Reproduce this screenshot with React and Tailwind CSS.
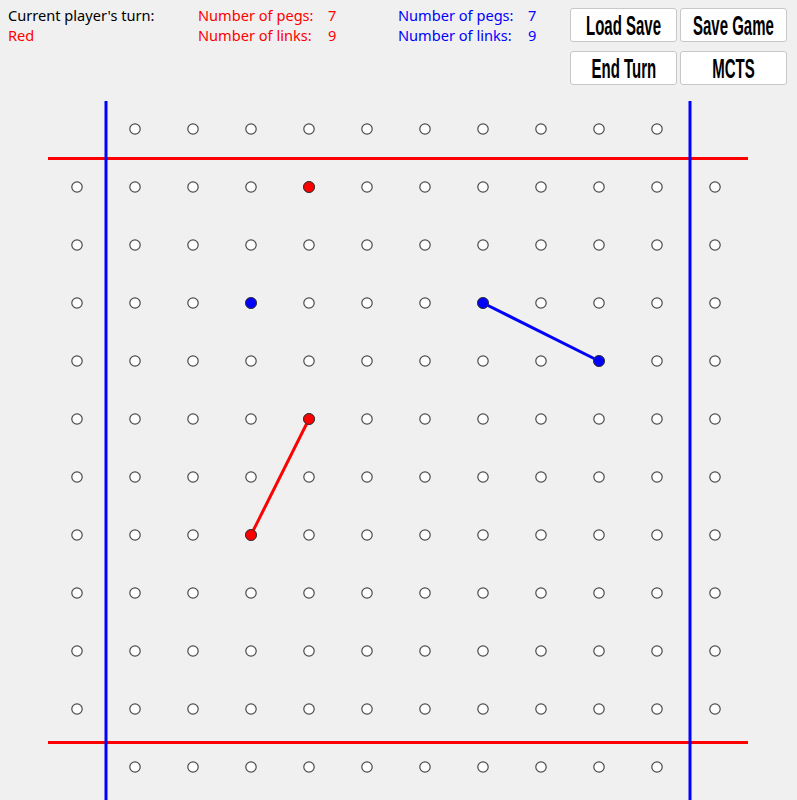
const COLS = [77, 135, 193, 251, 309, 367, 425, 483, 541, 599, 657, 715];
const ROWS = [129, 187, 245, 303, 361, 419, 477, 535, 593, 651, 709, 767];

const RED_PEGS = [[4, 1], [4, 5], [3, 7]];
const BLUE_PEGS = [[3, 3], [7, 3], [9, 4]];

const isCorner = (c, r) => (c === 0 || c === 11) && (r === 0 || r === 11);

const Board = () => {
  const holes = [];
  ROWS.forEach((y, r) =>
    COLS.forEach((x, c) => {
      if (isCorner(c, r)) return;
      holes.push(
        <circle key={`${c}-${r}`} cx={x} cy={y} r="5.2" fill="#ffffff" stroke="#4a4a4a" strokeWidth="1.2" />
      );
    })
  );

  return (
    <svg className="block" width="797" height="706" viewBox="0 94 797 706">
      {/* borders */}
      <line x1="48" y1="158.5" x2="748" y2="158.5" stroke="#ff0000" strokeWidth="3" />
      <line x1="48" y1="742.5" x2="748" y2="742.5" stroke="#ff0000" strokeWidth="3" />
      <line x1="106" y1="101" x2="106" y2="800" stroke="#0000ff" strokeWidth="3" />
      <line x1="690" y1="101" x2="690" y2="800" stroke="#0000ff" strokeWidth="3" />

      {holes}

      {/* links */}
      <line x1={COLS[4]} y1={ROWS[5]} x2={COLS[3]} y2={ROWS[7]} stroke="#ff0000" strokeWidth="3" />
      <line x1={COLS[7]} y1={ROWS[3]} x2={COLS[9]} y2={ROWS[4]} stroke="#0000ff" strokeWidth="3" />

      {RED_PEGS.map(([c, r]) => (
        <circle key={`r${c}-${r}`} cx={COLS[c]} cy={ROWS[r]} r="5.5" fill="#ff0000" stroke="#333" strokeWidth="1" />
      ))}
      {BLUE_PEGS.map(([c, r]) => (
        <circle key={`b${c}-${r}`} cx={COLS[c]} cy={ROWS[r]} r="5.5" fill="#0000ff" stroke="#333" strokeWidth="1" />
      ))}
    </svg>
  );
};

const Btn = ({ children }) => (
  <button
    className="w-[107px] h-[34px] bg-white border border-[#c8c8c8] rounded-[3px] flex items-center justify-center
      whitespace-nowrap overflow-hidden text-black"
  >
    <span className="inline-block text-[25px] leading-none font-bold font-['Liberation_Sans',sans-serif] scale-x-[0.6] scale-y-[1.12]">
      {children}
    </span>
  </button>
);

export default function App() {
  return (
    <div className="w-[797px] h-[800px] bg-[#f0f0f0] overflow-hidden font-['Noto_Sans',sans-serif] text-[14.6px] leading-[20px]">
      <div className="flex h-[94px]">
        <div className="w-[190px] pl-2 pt-[5px]">
          <div className="text-black">Current player's turn:</div>
          <div className="text-[#ff0000]">Red</div>
        </div>
        <div className="w-[200px] pl-2 pt-[5px] text-[#ff0000]">
          <div className="flex"><span className="w-[130px]">Number of pegs:</span><span>7</span></div>
          <div className="flex"><span className="w-[130px]">Number of links:</span><span>9</span></div>
        </div>
        <div className="w-[180px] pl-2 pt-[5px] text-[#0000ff]">
          <div className="flex"><span className="w-[130px]">Number of pegs:</span><span>7</span></div>
          <div className="flex"><span className="w-[130px]">Number of links:</span><span>9</span></div>
        </div>
        <div className="grid grid-cols-[107px_107px] auto-rows-[34px] gap-x-[3px] gap-y-[9px] pt-[8px]">
          <Btn>Load Save</Btn>
          <Btn>Save Game</Btn>
          <Btn>End Turn</Btn>
          <Btn>MCTS</Btn>
        </div>
      </div>
      <Board />
    </div>
  );
}
